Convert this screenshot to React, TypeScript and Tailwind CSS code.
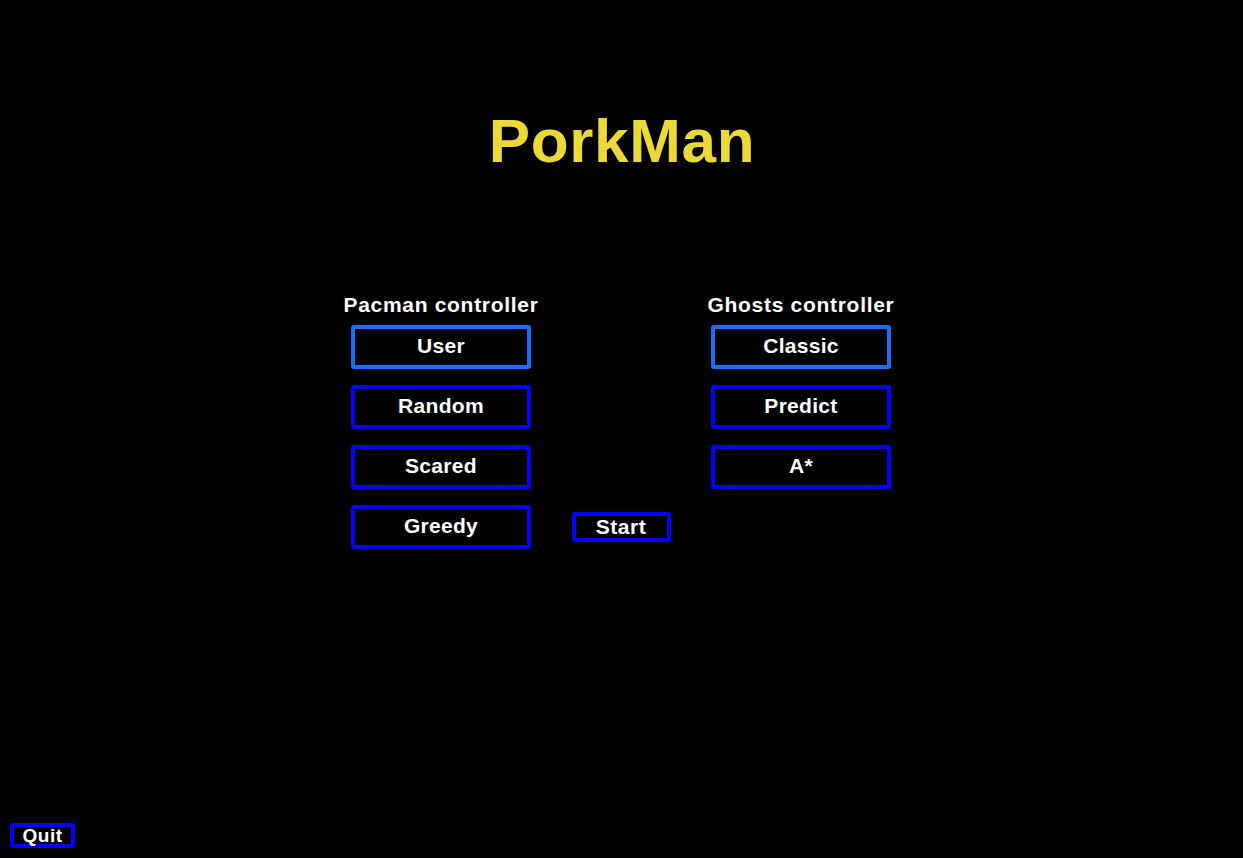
import React, { useState } from 'react';

const font = { fontFamily: '"Liberation Sans", Arial, sans-serif' };

const ChoiceButton = ({ label, active, onClick }: { label: string; active: boolean; onClick: () => void }) => (
  <button
    onClick={onClick}
    className={`w-[180px] h-[44px] border-4 rounded-[3px] bg-black text-white text-[21px] font-bold leading-none pb-[3px] flex items-center justify-center tracking-[0.3px] ${
      active ? 'border-[#1670f5]' : 'border-[#0000ff]'
    }`}
  >
    {label}
  </button>
);

const Column = ({
  title,
  options,
  selected,
  onSelect,
}: {
  title: string;
  options: string[];
  selected: string;
  onSelect: (o: string) => void;
}) => (
  <div className="w-[180px] flex flex-col items-center">
    <div className="h-[24px] leading-[24px] text-[21px] font-bold text-white whitespace-nowrap tracking-[0.7px] mb-2">
      {title}
    </div>
    <div className="flex flex-col gap-4">
      {options.map((o) => (
        <ChoiceButton key={o} label={o} active={o === selected} onClick={() => onSelect(o)} />
      ))}
    </div>
  </div>
);

export default function App() {
  const [pacman, setPacman] = useState('User');
  const [ghosts, setGhosts] = useState('Classic');

  return (
    <div className="h-screen w-full bg-black flex flex-col overflow-hidden" style={font}>
      {/* Title */}
      <h1 className="pt-[110px] pl-[1px] text-center text-[62px] leading-[62px] font-bold tracking-[0.7px] text-[#ebd93a]">
        PorkMan
      </h1>

      {/* Controllers */}
      <div className="mt-[121px] flex justify-center pr-[1px]">
        <Column
          title="Pacman controller"
          options={['User', 'Random', 'Scared', 'Greedy']}
          selected={pacman}
          onSelect={setPacman}
        />
        <div className="w-[180px] flex flex-col items-center pt-[219px]">
          <button className="w-[99px] h-[30px] border-4 rounded-[3px] bg-black text-white text-[21px] font-bold leading-none pb-[2px] flex items-center justify-center tracking-[0.5px] border-[#0000ff]">
            Start
          </button>
        </div>
        <Column
          title="Ghosts controller"
          options={['Classic', 'Predict', 'A*']}
          selected={ghosts}
          onSelect={setGhosts}
        />
      </div>

      {/* Quit */}
      <div className="mt-auto ml-[10px] mb-[10px]">
        <button className="w-[65px] h-[25px] border-4 rounded-[3px] bg-black text-white text-[19px] font-bold leading-none pb-[1px] flex items-center justify-center tracking-[0.5px] border-[#0000ff]">
          Quit
        </button>
      </div>
    </div>
  );
}
